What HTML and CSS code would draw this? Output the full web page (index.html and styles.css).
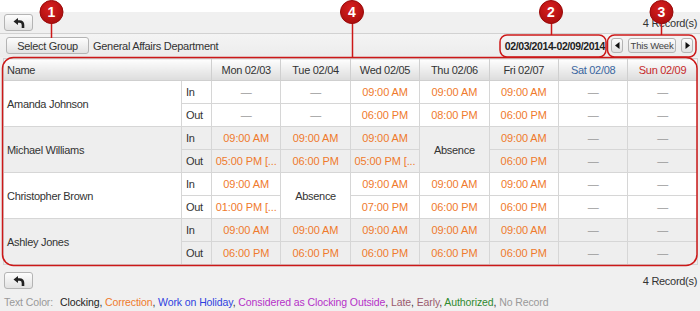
FILE: index.html
```html
<!DOCTYPE html>
<html>
<head>
<meta charset="utf-8">
<link rel="stylesheet" href="styles.css">
</head>
<body>
<div class="topspace"></div>
<div class="page">
  <div class="toolbar">
    <button class="btn back"><svg width="12" height="10" viewBox="0 0 12 10"><path d="M0.5 3.5 L5 0 L5 7 Z" fill="#222"/><path d="M4 3.5 H6.5 Q10 3.5 10 7 V10" fill="none" stroke="#222" stroke-width="2.6"/></svg></button>
    <span class="records">4 Record(s)</span>
  </div>
  <div class="groupbar">
    <div class="group-left">
      <button class="btn select">Select Group</button>
      <span class="dept">General Affairs Department</span>
    </div>
    <div class="group-right">
      <span class="range">02/03/2014-02/09/2014</span>
      <div class="nav">
        <button class="btn arrow"><svg width="5" height="7" viewBox="0 0 5 7"><path d="M4.5 0 L0 3.5 L4.5 7 Z" fill="#111"/></svg></button>
        <button class="btn week">This Week</button>
        <button class="btn arrow"><svg width="5" height="7" viewBox="0 0 5 7"><path d="M0.5 0 L5 3.5 L0.5 7 Z" fill="#111"/></svg></button>
      </div>
    </div>
  </div>
  <table class="grid">
    <colgroup>
      <col class="c-name"><col class="c-io">
      <col class="c-day"><col class="c-day"><col class="c-day"><col class="c-day"><col class="c-day"><col class="c-day"><col class="c-day">
    </colgroup>
    <thead>
      <tr>
        <th colspan="2" class="th-name">Name</th>
        <th>Mon 02/03</th><th>Tue 02/04</th><th>Wed 02/05</th><th>Thu 02/06</th><th>Fri 02/07</th>
        <th class="sat">Sat 02/08</th><th class="sun">Sun 02/09</th>
      </tr>
    </thead>
    <tbody class="odd">
      <tr><td rowspan="2" class="name">Amanda Johnson</td><td class="io">In</td>
        <td class="na">—</td><td class="na">—</td><td class="t">09:00 AM</td><td class="t">09:00 AM</td><td class="t">09:00 AM</td><td class="na">—</td><td class="na">—</td></tr>
      <tr><td class="io">Out</td>
        <td class="na">—</td><td class="na">—</td><td class="t">06:00 PM</td><td class="t">08:00 PM</td><td class="t">06:00 PM</td><td class="na">—</td><td class="na">—</td></tr>
    </tbody>
    <tbody class="even">
      <tr><td rowspan="2" class="name">Michael Williams</td><td class="io">In</td>
        <td class="t">09:00 AM</td><td class="t">09:00 AM</td><td class="t">09:00 AM</td><td rowspan="2" class="abs">Absence</td><td class="t">09:00 AM</td><td class="na">—</td><td class="na">—</td></tr>
      <tr><td class="io">Out</td>
        <td class="t">05:00 PM [...</td><td class="t">06:00 PM</td><td class="t">05:00 PM [...</td><td class="t">06:00 PM</td><td class="na">—</td><td class="na">—</td></tr>
    </tbody>
    <tbody class="odd">
      <tr><td rowspan="2" class="name">Christopher Brown</td><td class="io">In</td>
        <td class="t">09:00 AM</td><td rowspan="2" class="abs">Absence</td><td class="t">09:00 AM</td><td class="t">09:00 AM</td><td class="t">09:00 AM</td><td class="na">—</td><td class="na">—</td></tr>
      <tr><td class="io">Out</td>
        <td class="t">01:00 PM [...</td><td class="t">07:00 PM</td><td class="t">06:00 PM</td><td class="t">06:00 PM</td><td class="na">—</td><td class="na">—</td></tr>
    </tbody>
    <tbody class="even">
      <tr><td rowspan="2" class="name">Ashley Jones</td><td class="io">In</td>
        <td class="t">09:00 AM</td><td class="t">09:00 AM</td><td class="t">09:00 AM</td><td class="t">09:00 AM</td><td class="t">09:00 AM</td><td class="na">—</td><td class="na">—</td></tr>
      <tr><td class="io">Out</td>
        <td class="t">06:00 PM</td><td class="t">06:00 PM</td><td class="t">06:00 PM</td><td class="t">06:00 PM</td><td class="t">06:00 PM</td><td class="na">—</td><td class="na">—</td></tr>
    </tbody>
  </table>
  <div class="bottombar">
    <button class="btn back"><svg width="12" height="10" viewBox="0 0 12 10"><path d="M0.5 3.5 L5 0 L5 7 Z" fill="#222"/><path d="M4 3.5 H6.5 Q10 3.5 10 7 V10" fill="none" stroke="#222" stroke-width="2.6"/></svg></button>
    <span class="records">4 Record(s)</span>
  </div>
  <div class="legend">
    <span class="lg-label">Text Color:</span>
    <span class="lg-clock">Clocking</span>, <span class="lg-corr">Correction</span>, <span class="lg-hol">Work on Holiday</span>, <span class="lg-out">Considered as Clocking Outside</span>, <span class="lg-late">Late</span>, <span class="lg-late">Early</span>, <span class="lg-auth">Authorized</span>, <span class="lg-none">No Record</span>
  </div>
</div>
<svg class="annot" width="700" height="311" viewBox="0 0 700 311">
  <g fill="none" stroke="#cc1818" stroke-width="1.5">
    <rect x="2.5" y="57.5" width="694.5" height="208" rx="11"/>
    <rect x="500" y="35" width="106" height="22" rx="7"/>
    <rect x="607.5" y="35" width="88.5" height="22" rx="7"/>
    <line x1="51.5" y1="22" x2="51.5" y2="38"/>
    <line x1="352.5" y1="22" x2="352.5" y2="57"/>
    <line x1="551.5" y1="22" x2="551.5" y2="35"/>
    <line x1="661.5" y1="22" x2="661.5" y2="35"/>
  </g>
  <defs>
    <radialGradient id="bg" cx="0.45" cy="0.35" r="0.7">
      <stop offset="0" stop-color="#d82020"/>
      <stop offset="1" stop-color="#a80c0c"/>
    </radialGradient>
  </defs>
  <g fill="url(#bg)" stroke="#9a0a0a" stroke-width="1">
    <circle cx="51.5" cy="12" r="11.5"/>
    <circle cx="352" cy="12" r="11.5"/>
    <circle cx="551" cy="12" r="11.5"/>
    <circle cx="661.5" cy="12" r="11.5"/>
  </g>
  <g class="badge-num" fill="#fff" text-anchor="middle">
    <text x="51.5" y="17">1</text>
    <text x="352" y="17">4</text>
    <text x="551" y="17">2</text>
    <text x="661.5" y="17">3</text>
  </g>
</svg>
</body>
</html>
```

FILE: styles.css
```css
html, body {
  margin: 0;
  padding: 0;
}
body {
  width: 700px;
  height: 311px;
  overflow: hidden;
  background: #f0f0f0;
  font-family: "Liberation Sans", Arial, sans-serif;
  font-size: 11px;
  letter-spacing: -0.3px;
  color: #333;
  position: relative;
}
.topspace {
  height: 12px;
  background: #fff;
}
.toolbar {
  height: 21px;
  display: flex;
  align-items: center;
  justify-content: space-between;
  padding: 0 3px 0 4px;
  border-bottom: 1px solid #d2d2d2;
}
.btn {
  font-family: "Liberation Sans", Arial, sans-serif;
  font-size: 11px;
  letter-spacing: -0.3px;
  color: #333;
  border: 1px solid #b4b4b4;
  border-radius: 3px;
  background: linear-gradient(#fdfdfd, #e2e2e2);
  padding: 0;
  margin: 0;
  display: flex;
  align-items: center;
  justify-content: center;
  white-space: nowrap;
}
.back {
  width: 29px;
  height: 17px;
}
.records {
  font-size: 11px;
  color: #333;
}
.groupbar {
  height: 23px;
  display: flex;
  align-items: center;
  justify-content: space-between;
  padding: 0 7px 0 6px;
  background: linear-gradient(#f4f4f4, #ececec);
}
.group-left {
  display: flex;
  align-items: center;
  gap: 4px;
}
.select {
  width: 83px;
  height: 17px;
}
.dept {
  color: #333;
}
.group-right {
  display: flex;
  align-items: center;
}
.range {
  font-weight: bold;
  color: #222;
  font-size: 10.5px;
  letter-spacing: -0.4px;
  margin-right: 6px;
}
.nav {
  display: flex;
  align-items: center;
  gap: 5px;
}
.arrow {
  width: 12px;
  height: 15px;
}
.week {
  width: 48px;
  height: 15px;
  font-size: 9.5px;
  letter-spacing: -0.2px;
  color: #444;
}
.grid {
  border-collapse: collapse;
  margin: 1px 0 0 3px;
  width: 694px;
  table-layout: fixed;
}
.c-name { width: 178px; }
.c-io { width: 30px; }
.c-day { width: 69.4px; }
.grid th {
  height: 21px;
  padding: 0;
  font-weight: normal;
  color: #333;
  background: linear-gradient(#fefefe, #dcdcdc);
  border: 1px solid #cfcfcf;
  text-align: center;
}
.grid th.th-name {
  text-align: left;
  padding-left: 3px;
}
.grid th.sat { color: #3a66a0; }
.grid th.sun { color: #c62a2a; }
.grid td {
  height: 22px;
  padding: 0;
  border: 1px solid #d6d6d6;
  text-align: center;
  white-space: nowrap;
  overflow: hidden;
}
.grid tbody.odd td { background: #fff; }
.grid tbody.even td { background: #eeeeee; }
.grid td.name {
  text-align: left;
  padding-left: 3px;
  color: #333;
}
.grid td.io {
  text-align: left;
  padding-left: 4px;
  color: #333;
}
.grid td.t { color: #ef7a2c; letter-spacing: -0.1px; }
.grid td.na { color: #999; }
.grid td.abs { color: #333; }
.bottombar {
  display: flex;
  justify-content: space-between;
  align-items: center;
  padding: 0 3px 0 4px;
  margin-top: 7px;
}
.legend {
  margin-top: 7px;
  padding-left: 4px;
  color: #333;
  font-size: 10.5px;
  letter-spacing: -0.1px;
}
.lg-label { color: #999; margin-right: 4px; }
.lg-clock { color: #222; }
.lg-corr { color: #ef7a2c; }
.lg-hol { color: #2d3fe0; }
.lg-out { color: #b531c8; }
.lg-late { color: #9a5a6e; }
.lg-auth { color: #2f8a2f; }
.lg-none { color: #999; }
.annot {
  position: absolute;
  top: 0;
  left: 0;
  pointer-events: none;
}
.badge-num {
  font-family: "Liberation Sans", Arial, sans-serif;
  font-weight: bold;
  font-size: 14px;
  letter-spacing: 0;
}
```
